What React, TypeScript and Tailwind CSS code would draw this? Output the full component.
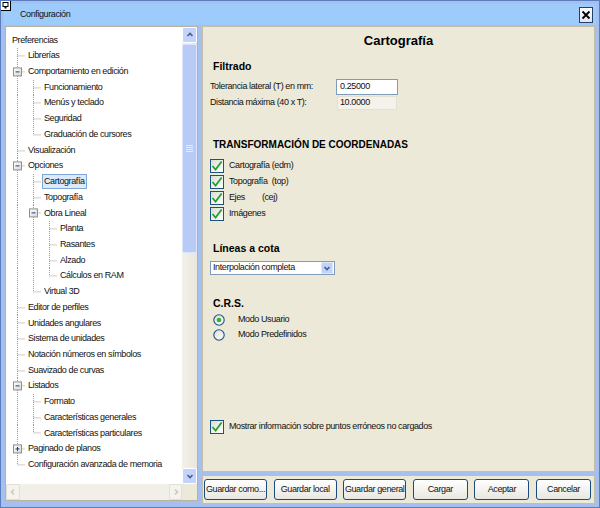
import React from "react";

type Row = { label: string; cells: string[]; selected?: boolean };

const rows: Row[] = [
  { label: "Preferencias", cells: [] },
  { label: "Librerías", cells: ["T"] },
  { label: "Comportamiento en edición", cells: ["Tm"] },
  { label: "Funcionamiento", cells: ["I", "T"] },
  { label: "Menús y teclado", cells: ["I", "T"] },
  { label: "Seguridad", cells: ["I", "T"] },
  { label: "Graduación de cursores", cells: ["I", "L"] },
  { label: "Visualización", cells: ["T"] },
  { label: "Opciones", cells: ["Tm"] },
  { label: "Cartografía", cells: ["I", "T"], selected: true },
  { label: "Topografía", cells: ["I", "T"] },
  { label: "Obra Lineal", cells: ["I", "Tm"] },
  { label: "Planta", cells: ["I", "I", "T"] },
  { label: "Rasantes", cells: ["I", "I", "T"] },
  { label: "Alzado", cells: ["I", "I", "T"] },
  { label: "Cálculos en RAM", cells: ["I", "I", "L"] },
  { label: "Virtual 3D", cells: ["I", "L"] },
  { label: "Editor de perfiles", cells: ["T"] },
  { label: "Unidades angulares", cells: ["T"] },
  { label: "Sistema de unidades", cells: ["T"] },
  { label: "Notación números en símbolos", cells: ["T"] },
  { label: "Suavizado de curvas", cells: ["T"] },
  { label: "Listados", cells: ["Tm"] },
  { label: "Formato", cells: ["I", "T"] },
  { label: "Características generales", cells: ["I", "T"] },
  { label: "Características particulares", cells: ["I", "L"] },
  { label: "Paginado de planos", cells: ["Tp"] },
  { label: "Configuración avanzada de memoria", cells: ["L"] },
];

function TreeCell({ t }: { t: string }) {
  const h = 15.75;
  const c = 8.5;
  const m = 7.9;
  const line = { stroke: "#9a9a9a", strokeWidth: 1, strokeDasharray: "1 1" };
  const box = t.endsWith("m") || t.endsWith("p");
  return (
    <svg width={16} height={h} className="block shrink-0">
      {(t === "I" || t.startsWith("T")) && <line x1={c} y1={0} x2={c} y2={h} {...line} />}
      {t.startsWith("L") && <line x1={c} y1={0} x2={c} y2={m} {...line} />}
      {t !== "I" && <line x1={c} y1={m} x2={17} y2={m} {...line} />}
      {box && (
        <>
          <defs>
            <linearGradient id="bx" x1="0" y1="0" x2="1" y2="1">
              <stop offset="0" stopColor="#ffffff" />
              <stop offset="1" stopColor="#d8d8d0" />
            </linearGradient>
          </defs>
          <rect x={4.5} y={m - 4} width={8} height={8} fill="url(#bx)" stroke="#8f8f8f" />
          <line x1={6.5} y1={m} x2={10.5} y2={m} stroke="#1f3f78" strokeWidth={1} />
          {t.endsWith("p") && <line x1={c} y1={m - 2} x2={c} y2={m + 2} stroke="#1f3f78" strokeWidth={1} />}
        </>
      )}
    </svg>
  );
}

function Chevron({ dir, color = "#4a5f86" }: { dir: "up" | "down" | "left" | "right"; color?: string }) {
  const d =
    dir === "up"
      ? "M1.5 5 L4 2.5 L6.5 5"
      : dir === "down"
      ? "M1.5 3 L4 5.5 L6.5 3"
      : dir === "left"
      ? "M5 1.5 L2.5 4 L5 6.5"
      : "M3 1.5 L5.5 4 L3 6.5";
  return (
    <svg width={8} height={8} className="block">
      <path d={d} fill="none" stroke={color} strokeWidth={1.6} />
    </svg>
  );
}

function Check() {
  return (
    <div className="w-[14px] h-[14px] border border-[#1c5180] bg-gradient-to-br from-[#dcdcd6] to-white flex items-center justify-center shrink-0">
      <svg width={12} height={12} className="block">
        <path d="M1.5 6 L4.6 9.6 L10.6 1.6" fill="none" stroke="#21a121" strokeWidth={1.7} />
      </svg>
    </div>
  );
}

function Radio({ on }: { on?: boolean }) {
  return (
    <svg width={12} height={12} className="block shrink-0">
      <defs>
        <linearGradient id="rg" x1="0" y1="0" x2="1" y2="1">
          <stop offset="0" stopColor="#dcdcd6" />
          <stop offset="1" stopColor="#ffffff" />
        </linearGradient>
      </defs>
      <circle cx={6} cy={6} r={5.2} fill="url(#rg)" stroke="#1c5180" strokeWidth={1.1} />
      {on && <circle cx={6} cy={6} r={2.3} fill="#2fb52f" />}
    </svg>
  );
}

function Btn({ label, w }: { label: string; w: string }) {
  return (
    <div
      className={`${w} h-[21px] shrink-0 border border-[#1d4a7e] rounded-[3px] bg-gradient-to-b from-white to-[#e8e7e0] flex items-center justify-center whitespace-nowrap`}
    >
      {label}
    </div>
  );
}

export default function App() {
  return (
    <div className="w-[600px] h-[508px] relative bg-[#a5c0ef] border border-[#5a7dbd] p-[3px] flex flex-col font-['Liberation_Sans',Arial,sans-serif] text-[9px] tracking-[-0.4px] text-[#111] overflow-hidden">
      {/* top-left icon */}
      <svg width={11} height={11} className="absolute -left-[1px] -top-[1px]">
        <rect x={0.5} y={0.5} width={10} height={10} fill="#ffffff" stroke="#000" />
        <rect x={3} y={2.5} width={5} height={4} fill="none" stroke="#000" />
        <rect x={4.5} y={6.5} width={2} height={2} fill="#000" />
      </svg>

      {/* title bar */}
      <div className="h-[21px] bg-[#9ccbfc] flex items-center pl-[16px] pr-[3px] shrink-0">
        <span className="mt-[1px]">Configuración</span>
        <div className="ml-auto w-[14px] h-[16px] border border-[#2a3f66] bg-gradient-to-b from-white to-[#dfe6f2] flex items-center justify-center">
          <svg width={10} height={10} className="block">
            <path d="M1.5 1.5 L8.5 8.5 M8.5 1.5 L1.5 8.5" stroke="#000" strokeWidth={1.8} />
          </svg>
        </div>
      </div>

      {/* main */}
      <div className="flex mt-[1px] flex-1 min-h-0">
        {/* left tree panel */}
        <div className="ml-[1px] w-[193px] h-[475px] border border-[#b8b2a0] bg-white flex flex-col">
          <div className="flex h-[457px]">
            <div className="w-[176px] pt-[5.5px] pl-[3px] overflow-hidden">
              {rows.map((r, i) => (
                <div key={i} className="flex items-center h-[15.72px]">
                  {r.cells.map((c, j) => (
                    <TreeCell key={j} t={c} />
                  ))}
                  <span
                    className={`ml-[1px] h-[15px] px-[1px] border flex items-center whitespace-nowrap ${
                      r.selected ? "bg-[#dcebfc] border-[#7fa6d6]" : "border-transparent"
                    }`}
                  >
                    {r.label}
                  </span>
                </div>
              ))}
            </div>
            {/* vertical scrollbar */}
            <div className="w-[15px] flex flex-col bg-gradient-to-r from-[#f3f1ea] to-[#e9e6dc]">
              <div className="h-[16px] rounded-[2px] border border-white bg-[#c3d3fb] flex items-center justify-center">
                <Chevron dir="up" />
              </div>
              <div className="flex-1 flex flex-col">
                <div className="mt-[1px] h-[209px] rounded-[2px] border border-[#dbe4fb] bg-[#b8cbf7] flex flex-col items-center justify-center gap-[1px]">
                  <div className="w-[7px] h-[1px] bg-[#e4ebfd]" />
                  <div className="w-[7px] h-[1px] bg-[#e4ebfd]" />
                  <div className="w-[7px] h-[1px] bg-[#e4ebfd]" />
                  <div className="w-[7px] h-[1px] bg-[#e4ebfd]" />
                </div>
              </div>
              <div className="h-[16px] rounded-[2px] border border-white bg-[#c3d3fb] flex items-center justify-center">
                <Chevron dir="down" />
              </div>
            </div>
          </div>
          {/* horizontal scrollbar */}
          <div className="h-[16px] flex">
            <div className="w-[176px] flex bg-[#f1efe7]">
              <div className="w-[14px] h-[16px] border border-[#e2dfd4] rounded-[2px] bg-[#f4f3ee] flex items-center justify-center">
                <Chevron dir="left" color="#c9c7bf" />
              </div>
              <div className="flex-1" />
              <div className="w-[13px] h-[16px] border border-[#e2dfd4] rounded-[2px] bg-[#f4f3ee] flex items-center justify-center">
                <Chevron dir="right" color="#c9c7bf" />
              </div>
            </div>
            <div className="w-[15px] bg-[#ece9d8]" />
          </div>
        </div>

        {/* right column */}
        <div className="ml-[4px] w-[393px] flex flex-col">
          <div className="h-[446px] border border-[#c4bea9] bg-[#ece9d8] flex flex-col">
            <div className="h-[27px] flex items-center justify-center text-[13px] font-bold tracking-normal text-black">
              Cartografía
            </div>
            <div className="mt-[6px] h-[14px] flex items-center pl-[10px] text-[10.5px] font-bold tracking-normal text-black">
              Filtrado
            </div>
            <div className="mt-[5px] h-[16px] flex items-center pl-[7px]">
              <span className="w-[126px]">Tolerancia lateral (T) en mm:</span>
              <div className="w-[62px] h-[16px] border border-[#7f9db9] bg-white flex items-center pl-[3px]">
                0.25000
              </div>
            </div>
            <div className="mt-[1px] h-[14px] flex items-center pl-[7px]">
              <span className="w-[127px]">Distancia máxima (40 x T):</span>
              <div className="w-[60px] h-[14px] border border-[#e4e0d2] bg-[#f4f2eb] flex items-center pl-[2px]">
                10.0000
              </div>
            </div>
            <div className="mt-[27px] h-[14px] flex items-center pl-[10px] text-[10px] font-bold tracking-normal text-black">
              TRANSFORMACIÓN DE COORDENADAS
            </div>
            <div className="mt-[7px] flex flex-col pl-[7px]">
              <div className="h-[16px] flex items-center gap-[5px]">
                <Check />
                <span>Cartografía (edm)</span>
              </div>
              <div className="h-[16px] flex items-center gap-[5px]">
                <Check />
                <span className="whitespace-pre">Topografía  (top)</span>
              </div>
              <div className="h-[16px] flex items-center gap-[5px]">
                <Check />
                <span>Ejes</span>
                <span className="ml-[12px]">(cej)</span>
              </div>
              <div className="h-[16px] flex items-center gap-[5px]">
                <Check />
                <span>Imágenes</span>
              </div>
            </div>
            <div className="mt-[20px] h-[14px] flex items-center pl-[10px] text-[10.5px] font-bold tracking-normal text-black">
              Líneas a cota
            </div>
            <div className="mt-[5px] pl-[7px]">
              <div className="w-[125px] h-[14px] border border-[#7f9db9] bg-white flex items-center">
                <span className="flex-1 pl-[2px]">Interpolación completa</span>
                <div className="w-[12px] h-[12px] mr-[1px] rounded-[1px] bg-[#c1d2fb] border border-[#dfe7fc] flex items-center justify-center">
                  <Chevron dir="down" />
                </div>
              </div>
            </div>
            <div className="mt-[22px] h-[14px] flex items-center pl-[10px] text-[10.5px] font-bold tracking-normal text-black">
              C.R.S.
            </div>
            <div className="mt-[1px] flex flex-col pl-[10px]">
              <div className="h-[15px] flex items-center gap-[13px]">
                <Radio on />
                <span>Modo Usuario</span>
              </div>
              <div className="h-[15px] flex items-center gap-[13px]">
                <Radio />
                <span>Modo Predefinidos</span>
              </div>
            </div>
            <div className="mt-[77px] h-[16px] flex items-center gap-[5px] pl-[7px]">
              <Check />
              <span>Mostrar información sobre puntos erróneos no cargados</span>
            </div>
          </div>

          {/* buttons */}
          <div className="mt-[3px] h-[29px] border border-[#c4bea9] bg-[#ece9d8] flex items-center pl-[1px] gap-[6.6px]">
            <Btn label="Guardar como..." w="w-[63px]" />
            <Btn label="Guardar local" w="w-[63px]" />
            <Btn label="Guardar general" w="w-[63px]" />
            <Btn label="Cargar" w="w-[55px]" />
            <Btn label="Aceptar" w="w-[55px]" />
            <Btn label="Cancelar" w="w-[55px]" />
          </div>
        </div>
      </div>
    </div>
  );
}
